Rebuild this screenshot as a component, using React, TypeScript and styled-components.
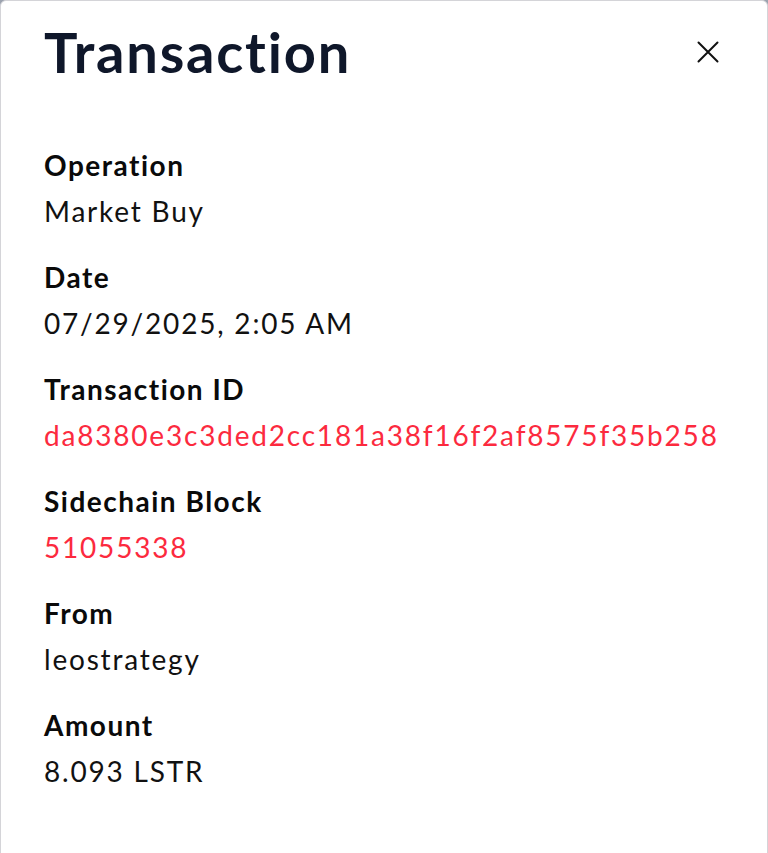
import React from "react";
import styled, { createGlobalStyle } from "styled-components";

const Global = createGlobalStyle`
  html, body { margin: 0; padding: 0; background: #9ca3af; }
  body { font-family: Lato, "Noto Sans", sans-serif; }
  * { box-sizing: border-box; }
`;

const Card = styled.div`
  width: 768px;
  min-height: 870px;
  background: #ffffff;
  border: 1px solid #d4d4d8;
  border-radius: 6px;
  padding: 0 45px 40px 43px;
`;

const Header = styled.div`
  display: flex;
  align-items: center;
  justify-content: space-between;
  height: 104px;
  padding-bottom: 2px;
`;

const Title = styled.h1`
  margin: 0 0 0 0;
  font-family: Lato, sans-serif;
  font-weight: 700;
  font-size: 56px;
  line-height: 1;
  color: #0f172a;
  letter-spacing: 1.8px;
`;

const CloseButton = styled.button`
  width: 28px;
  height: 28px;
  padding: 0;
  border: 0;
  background: transparent;
  display: flex;
  align-items: center;
  justify-content: center;
  color: #111111;
  cursor: pointer;
`;

const List = styled.dl`
  margin: 37px 0 0 0;
  display: flex;
  flex-direction: column;
  gap: 20px;
`;

const Field = styled.div`
  display: flex;
  flex-direction: column;
`;

const Label = styled.dt`
  font-weight: 700;
  font-size: 28px;
  line-height: 46px;
  letter-spacing: 1.5px;
  color: #0a0a0a;
`;

const Value = styled.dd<{ $accent?: boolean }>`
  margin: 0;
  font-weight: 400;
  font-size: 28px;
  line-height: 46px;
  letter-spacing: 1.8px;
  color: ${(p) => (p.$accent ? "#fc2a3e" : "#111111")};
`;

const rows: { label: string; value: string; accent?: boolean }[] = [
  { label: "Operation", value: "Market Buy" },
  { label: "Date", value: "07/29/2025, 2:05 AM" },
  { label: "Transaction ID", value: "da8380e3c3ded2cc181a38f16f2af8575f35b258", accent: true },
  { label: "Sidechain Block", value: "51055338", accent: true },
  { label: "From", value: "leostrategy" },
  { label: "Amount", value: "8.093 LSTR" },
];

export default function App() {
  return (
    <>
      <Global />
      <Card>
        <Header>
          <Title>Transaction</Title>
          <CloseButton aria-label="Close">
            <svg width="24" height="24" viewBox="0 0 24 24" fill="none" stroke="currentColor" strokeWidth="2" strokeLinecap="round">
              <path d="M2.5 2.5L21.5 21.5M21.5 2.5L2.5 21.5" />
            </svg>
          </CloseButton>
        </Header>
        <List>
          {rows.map((r) => (
            <Field key={r.label}>
              <Label>{r.label}</Label>
              <Value $accent={r.accent}>{r.value}</Value>
            </Field>
          ))}
        </List>
      </Card>
    </>
  );
}
